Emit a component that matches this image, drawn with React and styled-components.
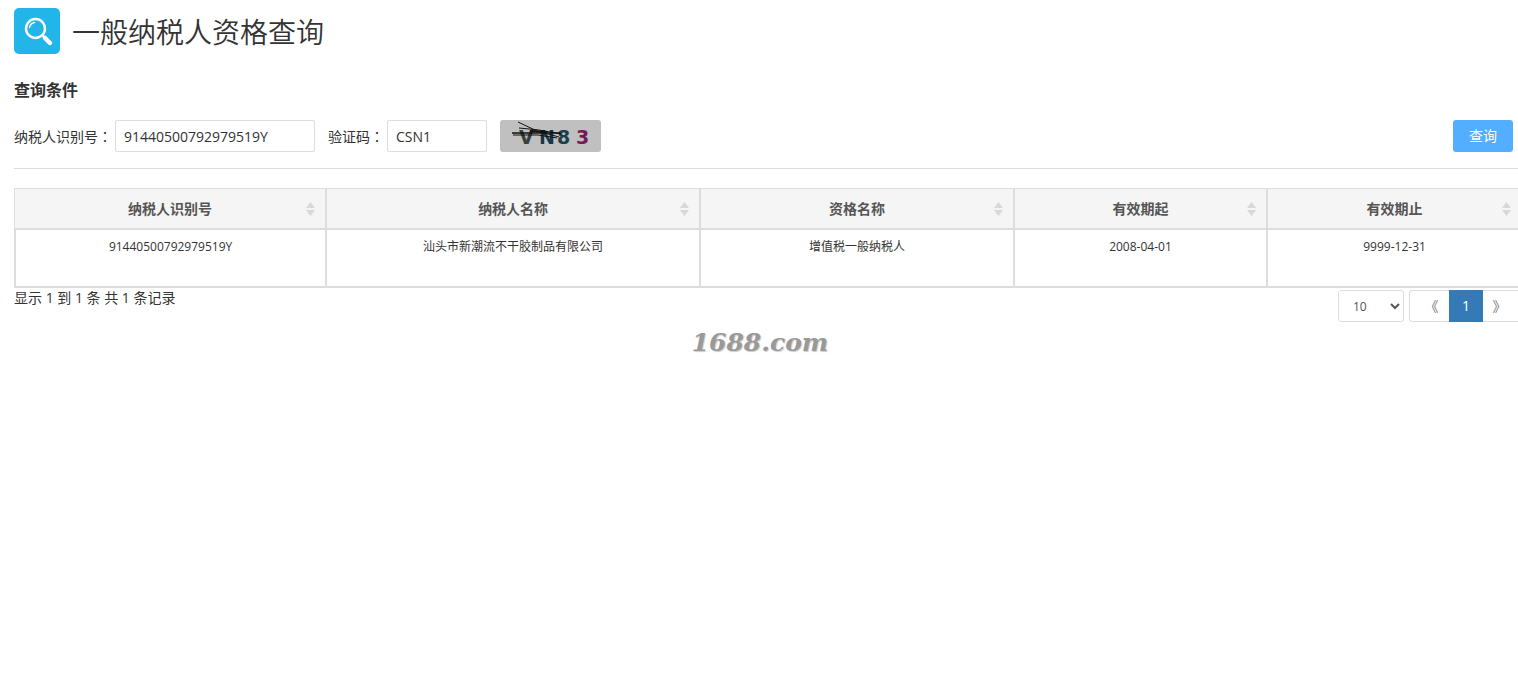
import React, { useState } from 'react';
import styled, { createGlobalStyle } from 'styled-components';

const GlobalStyle = createGlobalStyle`
  body {
    margin: 0;
    overflow-x: hidden;
    background: #fff;
    color: #333;
    font-family: 'Open Sans', 'Noto Sans CJK SC', sans-serif;
    font-size: 14px;
    line-height: 20px;
  }

  *, *::before, *::after {
    box-sizing: border-box;
  }

  button, input, select {
    font: inherit;
    color: inherit;
  }
`;

const Page = styled.main`
  padding: 8px 0 0 14px;
`;

const Header = styled.header`
  display: flex;
  align-items: center;
  gap: 12px;
`;

const Logo = styled.svg`
  width: 46px;
  height: 46px;
  flex: none;
`;

const Title = styled.h1`
  margin: 0;
  padding-top: 2px;
  font-size: 28px;
  font-weight: 350;
  line-height: 44px;
`;

const Subtitle = styled.h2`
  margin: 26px 0 20px;
  font-size: 16px;
  font-weight: bold;
  line-height: 20px;
`;

const Form = styled.form`
  display: flex;
  align-items: center;
  padding: 0 5px 16px 0;
  border-bottom: 1px solid #ddd;
`;

const Label = styled.label`
  white-space: nowrap;
`;

// the TC face centres the full-width colon in its box
const Colon = styled.span`
  font-family: 'Noto Sans CJK TC', sans-serif;
`;

const TextInput = styled.input`
  width: ${({ $width }) => $width}px;
  height: 32px;
  margin: 0 13px 0 3px;
  padding: 0 8px;
  border: 1px solid #ddd;
  border-radius: 2px;
  background: #fff;
  outline: 0;
`;

const Captcha = styled.svg`
  width: 101px;
  height: 32px;
  border-radius: 3px;
  background: #c0c0c0;
`;

const SearchButton = styled.button`
  width: 60px;
  height: 32px;
  margin-left: auto;
  padding: 0;
  border: 0;
  border-radius: 3px;
  background: #54aeff;
  color: #fff;
  cursor: pointer;
`;

const TableWrap = styled.div`
  margin: 19px -5px 0 0;
`;

const Table = styled.table`
  width: 100%;
  table-layout: fixed;
  border-collapse: separate;
  border-spacing: 0;
  border-top: 1px solid #ddd;
  border-left: 1px solid #ddd;
  text-align: center;
`;

const Col = styled.col`
  width: ${({ $share }) => $share}%;
`;

const Th = styled.th`
  height: 41px;
  padding: 0 8px;
  border-right: 2px solid #ddd;
  border-bottom: 2px solid #ddd;
  background: #f5f5f5;
  color: #555;
`;

const Heading = styled.div`
  display: flex;
  align-items: center;
  padding: 0 2px 0 11px;

  span {
    flex: 1;
  }
`;

const SortIcon = styled.svg`
  width: 9px;
  height: 14px;
  fill: #d8d8d8;
`;

const Td = styled.td`
  height: 58px;
  padding: 7px 8px;
  border-right: 2px solid #ddd;
  border-bottom: 2px solid #ddd;
  font-size: 12px;
  vertical-align: top;

  &:first-child {
    border-left: 1px solid #ddd;
  }
`;

const Footer = styled.footer`
  display: flex;
  justify-content: space-between;
  margin-right: -5px;
`;

const Pager = styled.nav`
  display: flex;
  padding-top: 2px;
`;

const PageSize = styled.select`
  width: 66px;
  height: 32px;
  margin-right: 5px;
  padding: 0 0 0 10px;
  border: 1px solid #ddd;
  border-radius: 3px;
  background: #fff;
  color: #555;
  font-size: 12px;
`;

const PageButton = styled.button`
  width: 40px;
  height: 32px;
  padding: 0 0 0 4px;
  border: 1px solid #ddd;
  border-right: 0;
  border-radius: 3px 0 0 3px;
  background: #fff;
  color: #777;

  &:last-child {
    padding: 0 6px 0 0;
    border-right: 1px solid #ddd;
    border-left: 0;
    border-radius: 0 3px 3px 0;
  }
`;

const CurrentPage = styled.button`
  width: 34px;
  height: 32px;
  padding: 0;
  border: 0;
  background: #337ab7;
  color: #fff;
`;

const Watermark = styled.p`
  margin: 6px 0 0;
  padding-right: 12px;
  color: #999;
  font-family: 'DejaVu Serif', serif;
  font-size: 25px;
  font-style: italic;
  font-weight: bold;
  line-height: 30px;
  text-align: center;
  text-shadow: 1px 1px 1px #ccc;
`;

const columns = [
  { key: 'id', title: '纳税人识别号', share: 20.7 },
  { key: 'name', title: '纳税人名称', share: 24.8 },
  { key: 'type', title: '资格名称', share: 20.8 },
  { key: 'from', title: '有效期起', share: 16.8 },
  { key: 'to', title: '有效期止', share: 16.9 },
];

const rows = [
  {
    id: '91440500792979519Y',
    name: '汕头市新潮流不干胶制品有限公司',
    type: '增值税一般纳税人',
    from: '2008-04-01',
    to: '9999-12-31',
  },
];

const SearchLogo = () => (
  <Logo viewBox="0 0 46 46" aria-hidden="true">
    <rect width="46" height="46" rx="5" fill="#22b5e7" />
    <circle cx="21.500" cy="20.500" r="9.500" fill="none" stroke="#fff" strokeWidth="2.400" />
    <path d="M15.500 19.500a6.500 6.500 0 0 1 5-5" fill="none" stroke="#fff" strokeWidth="1.300" strokeLinecap="round" />
    <path d="M28 27l2 2" stroke="#fff" strokeWidth="2" />
    <path d="M31 30l5 5" stroke="#fff" strokeWidth="4.500" strokeLinecap="round" />
  </Logo>
);

const CaptchaImage = () => (
  <Captcha viewBox="0 0 101 32" role="img" aria-label="验证码">
    <g fontFamily="DejaVu Sans, sans-serif" fontWeight="bold" fontSize="19">
      <text x="19" y="24" fill="#35423f">V</text>
      <text x="39" y="24" fill="#16384a">N</text>
      <text x="57" y="24" fill="#1b3f4c">8</text>
      <text x="76" y="24" fill="#751957">3</text>
    </g>
    <g fill="none" stroke="#111" strokeWidth="1">
      <path d="M18 2L37 11L59 17" />
      <path d="M19 8L39 10L61 14" />
      <path d="M12 13L60 13" strokeWidth="1.500" />
      <path d="M13 15L38 15L57 18" />
      <path d="M30 11L47 12" strokeWidth="2" />
    </g>
  </Captcha>
);

const App = () => {
  const [taxId, setTaxId] = useState('91440500792979519Y');
  const [code, setCode] = useState('CSN1');

  return (
    <>
      <GlobalStyle />
      <Page>
        <Header>
          <SearchLogo />
          <Title>一般纳税人资格查询</Title>
        </Header>

        <Subtitle>查询条件</Subtitle>
        <Form onSubmit={e => e.preventDefault()}>
          <Label htmlFor="tax-id">纳税人识别号<Colon>：</Colon></Label>
          <TextInput id="tax-id" $width={200} value={taxId} onChange={e => setTaxId(e.target.value)} />
          <Label htmlFor="code">验证码<Colon>：</Colon></Label>
          <TextInput id="code" $width={100} value={code} onChange={e => setCode(e.target.value)} />
          <CaptchaImage />
          <SearchButton type="submit">查询</SearchButton>
        </Form>

        <TableWrap>
          <Table>
            <colgroup>
              {columns.map(({ key, share }) => <Col key={key} $share={share} />)}
            </colgroup>
            <thead>
              <tr>
                {columns.map(({ key, title }) => (
                  <Th key={key} scope="col">
                    <Heading>
                      <span>{title}</span>
                      <SortIcon viewBox="0 0 9 14" aria-hidden="true">
                        <path d="M4.500 0L9 6H0zM0 8H9L4.500 14z" />
                      </SortIcon>
                    </Heading>
                  </Th>
                ))}
              </tr>
            </thead>
            <tbody>
              {rows.map(row => (
                <tr key={row.id}>
                  {columns.map(({ key }) => <Td key={key}>{row[key]}</Td>)}
                </tr>
              ))}
            </tbody>
          </Table>
        </TableWrap>

        <Footer>
          <div>显示 1 到 1 条 共 1 条记录</div>
          <Pager aria-label="分页">
            <PageSize aria-label="每页条数" defaultValue="10">
              <option>10</option>
              <option>25</option>
              <option>50</option>
            </PageSize>
            <PageButton type="button">《</PageButton>
            <CurrentPage type="button" aria-current="page">1</CurrentPage>
            <PageButton type="button">》</PageButton>
          </Pager>
        </Footer>

        <Watermark>1688.com</Watermark>
      </Page>
    </>
  );
};

export default App;
